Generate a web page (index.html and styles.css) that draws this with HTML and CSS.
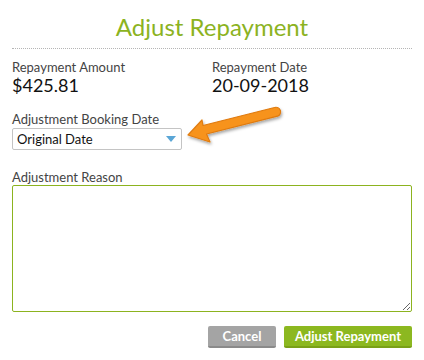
FILE: index.html
```html
<!DOCTYPE html>
<html>
<head>
<meta charset="utf-8">
<link rel="stylesheet" href="styles.css">
</head>
<body>
<div class="modal">
  <h1 class="title">Adjust Repayment</h1>
  <div class="info">
    <div class="info-col">
      <div class="label">Repayment Amount</div>
      <div class="value">$425.81</div>
    </div>
    <div class="info-col">
      <div class="label">Repayment Date</div>
      <div class="value">20-09-2018</div>
    </div>
  </div>
  <div class="field booking">
    <div class="label">Adjustment Booking Date</div>
    <div class="select">
      <span>Original Date</span>
      <svg class="caret" width="10" height="6" viewBox="0 0 10 6"><path d="M0 0H10L5 6Z" fill="#5aa6d6"/></svg>
    </div>
    <svg class="arrow" width="110" height="50" viewBox="0 0 110 50">
      <defs>
        <filter id="sh" x="-20%" y="-40%" width="140%" height="180%">
          <feDropShadow dx="1" dy="2" stdDeviation="1.5" flood-color="#000" flood-opacity="0.35"/>
        </filter>
      </defs>
      <path filter="url(#sh)" d="M4 33 L18 18 L19 23.5 L90.5 5.5 A4.5 4.5 0 0 1 93.5 14.2 L22.5 32 L26 40 Z" fill="#f7931e" stroke="#e07b10" stroke-width="1.2" stroke-linejoin="round"/>
    </svg>
  </div>
  <div class="field reason">
    <div class="label">Adjustment Reason</div>
    <textarea class="textarea"></textarea>
  </div>
  <div class="actions">
    <button class="btn btn-cancel">Cancel</button>
    <button class="btn btn-primary">Adjust Repayment</button>
  </div>
</div>
</body>
</html>
```
FILE: styles.css
```css
html, body {
  margin: 0;
  padding: 0;
  background: #fff;
  font-family: Lato, "Open Sans", sans-serif;
  color: #222;
}
.modal {
  width: 424px;
  height: 360px;
  box-sizing: border-box;
  padding: 0 12px;
}
.title {
  margin: 0;
  box-sizing: border-box;
  height: 49px;
  padding-top: 14px;
  font-size: 24px;
  font-weight: 400;
  line-height: 26px;
  color: #8cb31f;
  text-align: center;
  border-bottom: 1px dotted #b5b5b5;
}
.info {
  display: flex;
  margin-top: 10px;
}
.info-col {
  width: 200px;
}
.label {
  font-size: 13px;
  line-height: 16px;
  color: #444;
}
.value {
  font-size: 18px;
  line-height: 20px;
  color: #111;
}
.booking {
  position: relative;
  margin-top: 16px;
}
.select {
  width: 170px;
  height: 22px;
  box-sizing: border-box;
  border: 1px solid #c4c4c4;
  border-radius: 2px;
  margin-top: 1px;
  display: flex;
  align-items: center;
  justify-content: space-between;
  padding: 0 5px 0 4px;
  font-size: 13px;
  color: #111;
}
.caret {
  display: block;
}
.arrow {
  position: absolute;
  left: 172px;
  top: -9px;
}
.reason {
  margin-top: 19px;
}
.textarea {
  display: block;
  width: 400px;
  height: 127px;
  box-sizing: border-box;
  margin: 0;
  border: 1px solid #8cb31f;
  border-radius: 2px;
  resize: vertical;
  font-family: inherit;
}
.actions {
  display: flex;
  justify-content: flex-end;
  gap: 8px;
  margin-top: 14px;
}
.btn {
  height: 22px;
  border: none;
  border-radius: 2px;
  color: #fff;
  font-family: Lato, sans-serif;
  font-weight: 700;
  font-size: 13px;
  padding: 0;
  cursor: pointer;
}
.btn-cancel {
  width: 68px;
  background: #a4a4a4;
  border-bottom: 2px solid #8a8a8a;
}
.btn-primary {
  width: 128px;
  background: #8cb820;
  border-bottom: 2px solid #7aa018;
}
```
